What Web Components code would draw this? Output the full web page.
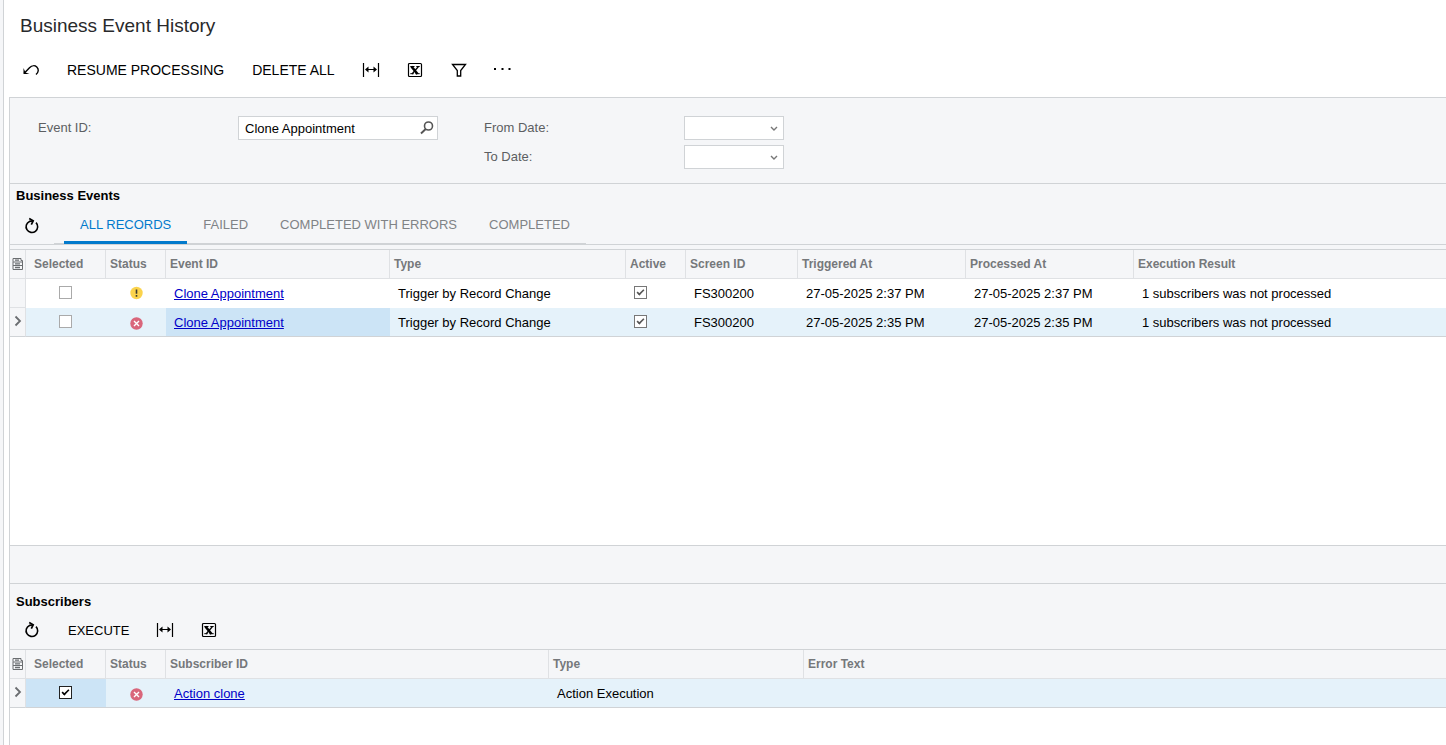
<!DOCTYPE html>
<html lang="en">
<head>
<meta charset="utf-8">
<title>Business Event History</title>
<style>
    html, body {
        margin: 0;
        height: 100%;
    }

    body {
        --line: #d0d3d6;
        --panel: #f5f6f8;
        --accent: #027acc;
        font-family: "Liberation Sans", Arial, sans-serif;
        font-size: 13px;
        color: #000;
        background: #fff;
    }
</style>
</head>
<body>
<event-history-screen></event-history-screen>

<script>
const ICONS = {
    undo: '<path d="M2.200 12.200L7.500 6.700c2.500-2.500 5.500-2.300 7.300-.6 2.200 2.200 1.900 5-.8 7.400" fill="none" stroke="currentColor" stroke-width="1.400"/><path d="M1.500 7v6h6l-4-1.500z" fill="currentColor"/>',
    fit: '<path d="M1.500 2v14M16.500 2v14M4 8.500h10" fill="none" stroke="currentColor" stroke-width="1.200"/><path d="M3 8.500l3.500-3v6zM15 8.500l-3.500-3v6z" fill="currentColor"/>',
    excel: '<rect x="2.500" y="2.500" width="13" height="13" rx="1" fill="none" stroke="currentColor" stroke-width="1.200"/><path d="M5.500 5.500l6 7.500" stroke="currentColor" stroke-width="2.600"/><path d="M12.500 5.500l-6.500 7.500" stroke="currentColor" stroke-width="1.200"/><path d="M4.300 5.500h4.200M10.300 5.500h3.400M4.300 12.700h3.400M9.500 12.700h4.200" stroke="currentColor"/>',
    filter: '<path d="M2.500 3.500h13l-4.800 6v5.500h-3.400v-5.500z" fill="none" stroke="currentColor" stroke-width="1.300"/>',
    more: '<path d="M0 7h2v2H0zM7.500 7h2v2h-2zM14.500 7h2v2h-2z" fill="currentColor"/>',
    refresh: '<path d="M13 5.600a5.800 5.800 0 1 1-6.500-1.200L9.500 4" fill="none" stroke="currentColor" stroke-width="1.600"/><path d="M6.200 1.600l4 2.200-1.900 3.900" fill="none" stroke="currentColor" stroke-width="1.700"/>',
    search: '<circle cx="10.500" cy="7" r="4" fill="none" stroke="currentColor" stroke-width="1.600"/><path d="M7.700 10l-4.700 4.500" stroke="currentColor" stroke-width="1.900"/>',
    chevron: '<path d="M6 8l3 3 3-3" fill="none" stroke="currentColor" stroke-width="1.400"/>',
    arrow: '<path d="M5.500 2.500l4.500 4.500-4.500 4.500" fill="none" stroke="currentColor" stroke-width="1.800"/>',
    form: '<path d="M3 4.500V1.500h8v2h1.500v9H3zM3 5h9M3 8.500h9" fill="none" stroke="currentColor"/><path d="M5 3.200h4M5 6.800h5M5 10.500h5" stroke="currentColor" stroke-width="1.300"/>',
    warning: '<circle cx="9.500" cy="9" r="6.200" fill="#fbd34c"/><path d="M9.500 5.500v4.300M9.500 11v1.700" stroke="#3d3a2c" stroke-width="1.600"/>',
    error: '<circle cx="9.500" cy="10.500" r="6.200" fill="#d9667b"/><path d="M7 8l5 5M12 8l-5 5" stroke="#fff" stroke-width="1.400"/>'
};

function icon(name, size = 18) {
    return `<svg width="${size}" height="${size}" viewBox="0 0 ${size} ${size}" aria-hidden="true">${ICONS[name]}</svg>`;
}

class ToolButton extends HTMLElement {
    connectedCallback() {
        const name = this.getAttribute('icon');
        const label = this.getAttribute('label') || '';

        this.attachShadow({ mode: 'open' }).innerHTML = `
            <style>
                :host {
                    display: block;
                    flex: none;
                }

                button {
                    display: flex;
                    align-items: center;
                    height: 32px;
                    padding: 0 ${name ? 13 : 14}px;
                    border: 0;
                    background: none;
                    font: inherit;
                    color: #000;
                    white-space: nowrap;
                    cursor: pointer;
                }

                svg {
                    display: block;
                }
            </style>
            <button type="button" ${name ? `aria-label="${label}"` : ''}>${name ? icon(name) : '<slot></slot>'}</button>
        `;
    }
}

class ToolBar extends HTMLElement {
    connectedCallback() {
        this.attachShadow({ mode: 'open' }).innerHTML = `
            <style>
                :host {
                    display: flex;
                    align-items: center;
                }
            </style>
            <slot></slot>
        `;
    }
}

class FilterField extends HTMLElement {
    connectedCallback() {
        const label = this.getAttribute('label');
        const isDate = this.getAttribute('type') === 'date';
        const value = this.getAttribute('value') || '';

        this.attachShadow({ mode: 'open' }).innerHTML = `
            <style>
                :host {
                    display: flex;
                    align-items: center;
                }

                label {
                    width: 200px;
                    padding-bottom: 2px;
                    color: #5c5f62;
                }

                .box {
                    display: flex;
                    align-items: center;
                    box-sizing: border-box;
                    width: 200px;
                    height: 24px;
                    border: 1px solid var(--line);
                    background: #fff;
                    color: #555;
                }

                .date {
                    display: grid;
                    width: 100px;
                    align-items: stretch;
                    color: #777;
                }

                .date > * {
                    grid-area: 1 / 1;
                }

                input, select {
                    flex: 1;
                    min-width: 0;
                    padding: 0 6px;
                    border: 0;
                    outline: 0;
                    appearance: none;
                    background: none;
                    font: inherit;
                    color: #000;
                }

                .date svg {
                    justify-self: end;
                    align-self: center;
                    pointer-events: none;
                }

                button {
                    display: flex;
                    padding: 0 1px;
                    border: 0;
                    background: none;
                    color: inherit;
                }
            </style>
            <label for="field">${label}</label>
            ${isDate
                ? `<div class="box date"><select id="field"><option></option></select>${icon('chevron')}</div>`
                : `<div class="box"><input id="field" type="text" value="${value}"><button type="button" aria-label="Select">${icon('search')}</button></div>`}
        `;
    }
}

class FilterPanel extends HTMLElement {
    connectedCallback() {
        this.attachShadow({ mode: 'open' }).innerHTML = `
            <style>
                :host {
                    display: flex;
                    gap: 46px;
                    padding: 18px 28px 14px;
                    border-bottom: 1px solid var(--line);
                    background: var(--panel);
                }

                .column {
                    display: flex;
                    flex-direction: column;
                    gap: 5px;
                }
            </style>
            <div class="column"><slot></slot></div>
            <div class="column"><slot name="dates"></slot></div>
        `;
    }
}

class TabList extends HTMLElement {
    connectedCallback() {
        const tabs = this.getAttribute('tabs').split('|');

        this.attachShadow({ mode: 'open' }).innerHTML = `
            <style>
                :host {
                    display: block;
                }

                div {
                    display: flex;
                    padding-left: 10px;
                    box-shadow: inset 0 -1px var(--line);
                }

                button {
                    height: 36px;
                    padding: 0 16px;
                    border: 0;
                    border-bottom: 3px solid transparent;
                    background: none;
                    font: inherit;
                    color: #808386;
                    white-space: nowrap;
                    cursor: pointer;
                }

                button[aria-selected="true"] {
                    border-bottom-color: var(--accent);
                    color: var(--accent);
                }
            </style>
            <div role="tablist">
                ${tabs.map((tab, i) => `<button type="button" role="tab" aria-selected="${i === 0}">${tab}</button>`).join('')}
            </div>
        `;
    }
}

class GridSection extends HTMLElement {
    connectedCallback() {
        this.attachShadow({ mode: 'open' }).innerHTML = `
            <style>
                :host {
                    display: flex;
                    flex-direction: column;
                }

                header {
                    background: var(--panel);
                }

                h2 {
                    margin: 0;
                    padding-left: 6px;
                    font-size: 13px;
                    line-height: 24px;
                }
            </style>
            <header>
                <h2>${this.getAttribute('heading')}</h2>
                <slot name="tools"></slot>
            </header>
            <slot></slot>
        `;
    }
}

class DataGrid extends HTMLElement {
    connectedCallback() {
        this.attachShadow({ mode: 'open' });
        this.render();
    }

    cell(column, value) {
        if (column.kind === 'check') {
            return `<input type="checkbox" aria-label="${column.title}" ${value ? 'checked' : ''}>`;
        }
        if (column.kind === 'status') {
            return icon(value);
        }
        if (column.kind === 'link') {
            return `<a href="#">${value}</a>`;
        }
        return value;
    }

    render() {
        const { columns, rows, current, focus } = GRIDS[this.getAttribute('source')];

        this.shadowRoot.innerHTML = `
            <style>
                :host {
                    display: block;
                    border-top: 1px solid var(--line);
                    background: #fff;
                }

                table {
                    width: 100%;
                    table-layout: fixed;
                    border-spacing: 0;
                }

                th, td {
                    box-sizing: border-box;
                    height: 29px;
                    padding: 0 4px;
                    border-bottom: 1px solid #dfe1e4;
                    text-align: left;
                    white-space: nowrap;
                    overflow: hidden;
                }

                th {
                    border-right: 1px solid #dfe1e4;
                    background: var(--panel);
                    font-size: 12px;
                    color: #75787b;
                }

                th:last-child {
                    border-right: 0;
                }

                th.selected {
                    padding-left: 8px;
                }

                td {
                    padding: 0 8px;
                    border-bottom-color: transparent;
                }

                th:first-child, td:first-child {
                    padding: 0;
                    border-right: 1px solid #dfe1e4;
                    border-bottom-color: #dfe1e4;
                    background: var(--panel);
                    color: #6a6d70;
                }

                td.check {
                    padding-bottom: 3px;
                }

                td.center {
                    padding-left: 0;
                    padding-right: 1px;
                    text-align: center;
                }

                tr.current td {
                    border-bottom-color: var(--line);
                    background: #e5f2fa;
                }

                tr.current td:first-child {
                    background: var(--panel);
                }

                tr.current td.focus {
                    background: #cce4f6;
                }

                svg {
                    display: block;
                    margin: 0 auto;
                }

                td:first-child {
                    padding-bottom: 2px;
                }

                a {
                    color: #0000c8;
                }

                input {
                    display: inline-grid;
                    place-content: center;
                    box-sizing: border-box;
                    width: 13px;
                    height: 13px;
                    margin: 0;
                    vertical-align: middle;
                    appearance: none;
                    border: 1px solid #aaa;
                    background: #fff;
                    color: #555;
                }

                input:checked {
                    border-color: #777;
                }

                input:checked::before {
                    content: "";
                    width: 7px;
                    height: 3px;
                    margin-bottom: 2px;
                    box-sizing: content-box;
                    border: solid currentColor;
                    border-width: 0 0 2px 2px;
                    transform: rotate(-45deg) scale(0.8);
                }

                .focus input:checked {
                    border-color: #222;
                    color: #000;
                }
            </style>
            <table>
                <colgroup>
                    <col style="width: 16px">
                    ${columns.map(c => `<col${c.width ? ` style="width: ${c.width}px"` : ''}>`).join('')}
                </colgroup>
                <thead>
                    <tr>
                        <th>${icon('form', 15)}</th>
                        ${columns.map(c => `<th class="${c.title.toLowerCase()}" scope="col">${c.title}</th>`).join('')}
                    </tr>
                </thead>
                <tbody>
                    ${rows.map((row, r) => `
                        <tr class="${r === current ? 'current' : ''}">
                            <td>${r === current ? icon('arrow', 15) : ''}</td>
                            ${columns.map((c, i) => `<td class="${c.kind || ''} ${c.center ? 'center' : ''} ${i === focus && r === current ? 'focus' : ''}">${this.cell(c, row[i])}</td>`).join('')}
                        </tr>
                    `).join('')}
                </tbody>
            </table>
        `;
    }
}

const GRIDS = {
    events: {
        current: 1,
        focus: 2,
        columns: [
            { title: 'Selected', width: 80, kind: 'check', center: true },
            { title: 'Status', width: 60, kind: 'status', center: true },
            { title: 'Event ID', width: 224, kind: 'link' },
            { title: 'Type', width: 236 },
            { title: 'Active', width: 60, kind: 'check' },
            { title: 'Screen ID', width: 112 },
            { title: 'Triggered At', width: 168 },
            { title: 'Processed At', width: 168 },
            { title: 'Execution Result' }
        ],
        rows: [
            [false, 'warning', 'Clone Appointment', 'Trigger by Record Change', true, 'FS300200', '27-05-2025 2:37 PM', '27-05-2025 2:37 PM', '1 subscribers was not processed'],
            [false, 'error', 'Clone Appointment', 'Trigger by Record Change', true, 'FS300200', '27-05-2025 2:35 PM', '27-05-2025 2:35 PM', '1 subscribers was not processed']
        ]
    },
    subscribers: {
        current: 0,
        focus: 0,
        columns: [
            { title: 'Selected', width: 80, kind: 'check', center: true },
            { title: 'Status', width: 60, kind: 'status', center: true },
            { title: 'Subscriber ID', width: 383, kind: 'link' },
            { title: 'Type', width: 255 },
            { title: 'Error Text' }
        ],
        rows: [
            [true, 'error', 'Action clone', 'Action Execution', '']
        ]
    }
};

class EventHistoryScreen extends HTMLElement {
    connectedCallback() {
        this.attachShadow({ mode: 'open' }).innerHTML = `
            <style>
                :host {
                    display: flex;
                    min-height: 100%;
                }

                .edge {
                    flex: none;
                    width: 3px;
                    border-right: 1px solid var(--line);
                    background: var(--panel);
                }

                main {
                    flex: 1;
                    min-width: 0;
                    display: flex;
                    flex-direction: column;
                    padding-left: 5px;
                }

                h1 {
                    margin: 0;
                    padding-left: 11px;
                    font-size: 19px;
                    font-weight: normal;
                    line-height: 52px;
                    color: #28292b;
                }

                .actions {
                    padding: 2px 0 11px;
                    font-size: 14px;
                }

                .content {
                    flex: 1;
                    display: flex;
                    flex-direction: column;
                    border: solid var(--line);
                    border-width: 1px 0 0 1px;
                }

                .events {
                    flex: 1;
                }

                .events data-grid {
                    flex: 1;
                }

                .views {
                    border-bottom: 1px solid var(--line);
                    margin-bottom: 4px;
                }

                .footer {
                    height: 37px;
                    border: solid var(--line);
                    border-width: 1px 0;
                    background: var(--panel);
                }

                .subscribers {
                    padding-top: 6px;
                    background: var(--panel);
                }

                .commands {
                    padding-bottom: 3px;
                }

                .subscribers data-grid {
                    min-height: 95px;
                }
            </style>
            <div class="edge"></div>
            <main>
                <h1>Business Event History</h1>
                <tool-bar class="actions">
                    <tool-button icon="undo" label="Undo"></tool-button>
                    <tool-button>RESUME PROCESSING</tool-button>
                    <tool-button>DELETE ALL</tool-button>
                    <tool-button icon="fit" label="Fit to screen"></tool-button>
                    <tool-button icon="excel" label="Export to Excel"></tool-button>
                    <tool-button icon="filter" label="Filter"></tool-button>
                    <tool-button icon="more" label="More"></tool-button>
                </tool-bar>
                <div class="content">
                    <filter-panel>
                        <filter-field label="Event ID:" value="Clone Appointment"></filter-field>
                        <filter-field slot="dates" type="date" label="From Date:"></filter-field>
                        <filter-field slot="dates" type="date" label="To Date:"></filter-field>
                    </filter-panel>
                    <grid-section class="events" heading="Business Events">
                        <tool-bar slot="tools" class="views">
                            <tool-button icon="refresh" label="Refresh"></tool-button>
                            <tab-list tabs="ALL RECORDS|FAILED|COMPLETED WITH ERRORS|COMPLETED"></tab-list>
                        </tool-bar>
                        <data-grid source="events"></data-grid>
                    </grid-section>
                    <div class="footer"></div>
                    <grid-section class="subscribers" heading="Subscribers">
                        <tool-bar slot="tools" class="commands">
                            <tool-button icon="refresh" label="Refresh"></tool-button>
                            <tool-button>EXECUTE</tool-button>
                            <tool-button icon="fit" label="Fit to screen"></tool-button>
                            <tool-button icon="excel" label="Export to Excel"></tool-button>
                        </tool-bar>
                        <data-grid source="subscribers"></data-grid>
                    </grid-section>
                </div>
            </main>
        `;
    }
}

customElements.define('tool-button', ToolButton);
customElements.define('tool-bar', ToolBar);
customElements.define('filter-field', FilterField);
customElements.define('filter-panel', FilterPanel);
customElements.define('tab-list', TabList);
customElements.define('grid-section', GridSection);
customElements.define('data-grid', DataGrid);
customElements.define('event-history-screen', EventHistoryScreen);
</script>
</body>
</html>
